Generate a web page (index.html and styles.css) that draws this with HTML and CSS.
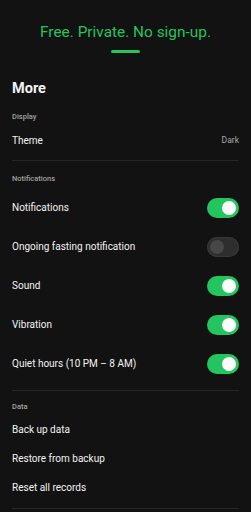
FILE: index.html
```html
<!DOCTYPE html>
<html lang="en">
<head>
    <meta charset="UTF-8">
    <title>More</title>
    <link rel="stylesheet" href="styles.css">
</head>
<body>
<div class="page">
    <div class="hero">
        <div class="tagline">Free. Private. No sign-up.</div>
        <div class="bar"></div>
    </div>

    <h1 class="title">More</h1>

    <!-- Display -->
    <div class="section">
        <div class="label">Display</div>
        <div class="row short">
            <span>Theme</span>
            <span class="value">Dark</span>
        </div>
    </div>

    <!-- Notifications -->
    <div class="section notif">
        <div class="label">Notifications</div>
        <div class="row"><span>Notifications</span><span class="toggle on"></span></div>
        <div class="row"><span>Ongoing fasting notification</span><span class="toggle"></span></div>
        <div class="row"><span>Sound</span><span class="toggle on"></span></div>
        <div class="row"><span>Vibration</span><span class="toggle on"></span></div>
        <div class="row"><span>Quiet hours (10 PM – 8 AM)</span><span class="toggle on"></span></div>
    </div>

    <!-- Data -->
    <div class="section data">
        <div class="label">Data</div>
        <div class="row link">Back up data</div>
        <div class="row link">Restore from backup</div>
        <div class="row link">Reset all records</div>
    </div>
</div>
</body>
</html>
```

FILE: styles.css
```css
body{
    margin: 0;
    background: #121212;
    color: #f2f2f2;
    font-family: Roboto, "Liberation Sans", sans-serif;
}
.page{
    padding: 0 12px;
}
.hero{
    padding-top: 22px;
    display: flex;
    flex-direction: column;
    align-items: center;
}
.tagline{
    color: #22c55e;
    font-size: 15.4px;
    line-height: 20px;
}
.bar{
    width: 29px;
    height: 3px;
    margin-top: 8px;
    border-radius: 2px;
    background: #22c55e;
}
.title{
    margin: 26px 0 0 0;
    font-size: 14.5px;
    line-height: 20px;
    font-weight: 700;
}
.section{
    border-bottom: 1px solid #262626;
}
.label{
    font-size: 7.5px;
    font-weight: 500;
    color: #a0a0a0;
    padding-top: 12px;
    margin-bottom: 2px;
    line-height: 12px;
}
.notif .label{
    margin-bottom: 3px;
}
.notif{
    padding-bottom: 7px;
}
.data .label{
    padding-top: 10px;
}
.data{
    padding-bottom: 6px;
}
.row{
    display: flex;
    justify-content: space-between;
    align-items: center;
    height: 39px;
    font-size: 10px;
}
.row.short{
    height: 30px;
    margin-bottom: 5px;
}
.row.link{
    height: 29px;
}
.value{
    font-size: 8.5px;
    color: #a8a8a8;
}
.toggle{
    position: relative;
    width: 32px;
    height: 20px;
    border-radius: 10px;
    background: #2e2e2e;
    box-shadow: inset 0 0 0 1px #383838;
}
.toggle::after{
    content: "";
    position: absolute;
    left: 3px;
    top: 3px;
    width: 14px;
    height: 14px;
    border-radius: 50%;
    background: #474747;
}
.toggle.on{
    background: #22c55e;
    box-shadow: none;
}
.toggle.on::after{
    left: auto;
    right: 3px;
    background: #ffffff;
}
```
